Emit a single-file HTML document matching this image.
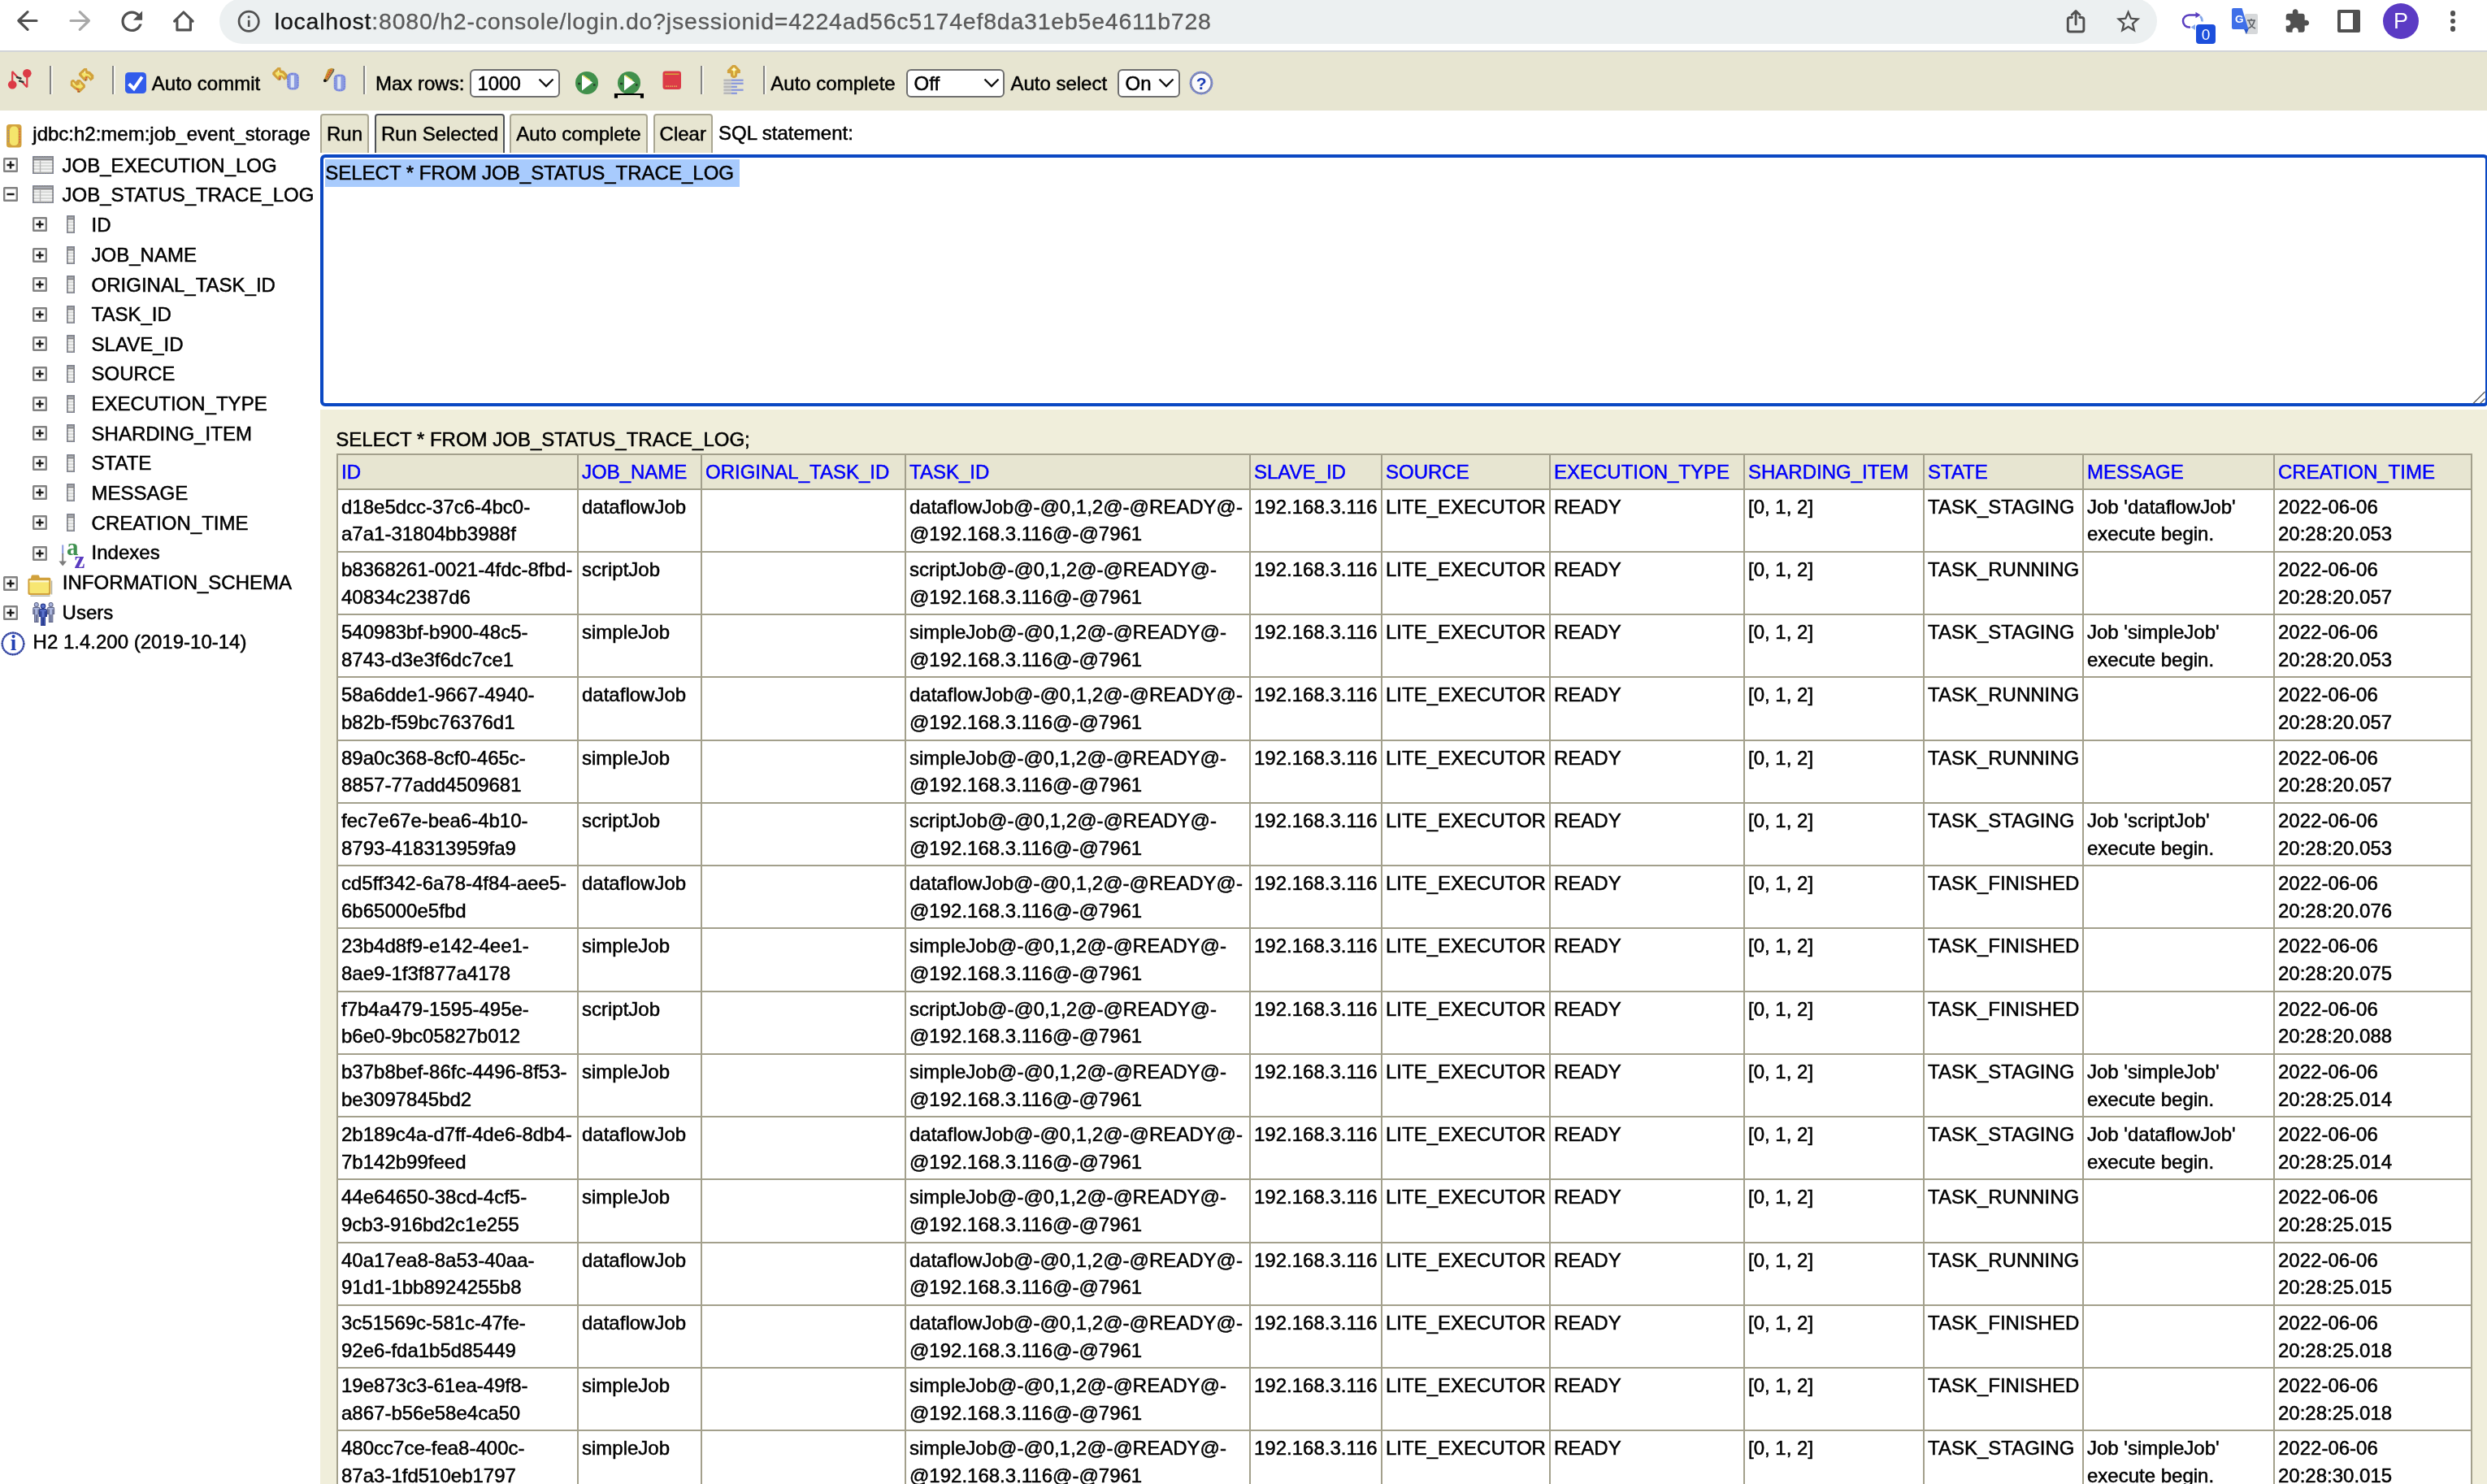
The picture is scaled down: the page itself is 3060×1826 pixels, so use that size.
<!DOCTYPE html><html><head><meta charset="utf-8"><title>H2 Console</title><style>
*{box-sizing:border-box;}
html,body{margin:0;padding:0;}
body{width:3060px;height:1826px;overflow:hidden;position:relative;background:#fff;
 font-family:"Liberation Sans",sans-serif;font-size:24px;color:#000;}
#root{position:absolute;left:0;top:0;width:3060px;height:1826px;overflow:hidden;will-change:transform;-webkit-text-stroke:0.5px;}
.abs{position:absolute;}
.t{position:absolute;white-space:nowrap;line-height:34px;font-size:24px;}
#chrome{position:absolute;left:0;top:0;width:3060px;height:62px;background:#fff;}
#chromeline{position:absolute;left:0;top:62px;width:3060px;height:2px;background:#d2d4d7;}
#pill{position:absolute;left:270px;top:-2px;width:2384px;height:56px;border-radius:28px;background:#ecf0f1;}
#url{position:absolute;left:337.8px;top:9px;font-size:28.5px;line-height:34px;letter-spacing:0.78px;color:#5a5a5a;white-space:nowrap;-webkit-text-stroke:0.3px;}
#url b{font-weight:normal;color:#161616;}
#h2bar{position:absolute;left:0;top:64px;width:3060px;height:72px;background:#e7e5d1;}
.sep{position:absolute;top:81px;width:4px;height:35px;background:linear-gradient(90deg,#858585 0,#858585 55%,#f6f5ee 55%,#f6f5ee 100%);}
.sel{position:absolute;top:85px;height:35px;border:2px solid #6f6f6f;border-radius:6px;background:#fff;}
.sel span{position:absolute;left:7.4px;top:-1px;line-height:34px;font-size:24px;}
.sel svg{position:absolute;right:4.7px;top:9.2px;}
#btns{position:absolute;left:394px;top:136px;width:2666px;height:52px;overflow:hidden;background:#fff;}
.btn{position:absolute;top:4px;height:52px;border:2px solid #a9a692;border-radius:4px;background:#e7e5d1;text-align:center;line-height:46px;font-size:24px;white-space:nowrap;}
#ta{position:absolute;left:394px;top:190px;width:2668px;height:310px;border:4px solid #0b48c3;border-radius:6px;background:#fff;}
#selhl{position:absolute;left:400px;top:196px;width:509.5px;height:34px;background:#a8cbfd;}
#result{position:absolute;left:394px;top:504px;width:2666px;height:1322px;background:#f0eedb;}
table.rs{position:absolute;left:414px;top:558px;border-collapse:collapse;table-layout:fixed;width:2626px;background:#fff;}
table.rs th,table.rs td{border:2px solid #a3a08c;padding:4px 4px;font-size:24px;line-height:33.625px;vertical-align:top;text-align:left;font-weight:normal;white-space:nowrap;overflow:hidden;}
table.rs th{background:#e7e5d1;color:#0000fa;padding-bottom:3px;}
.row{position:absolute;left:0;height:36px;}
</style></head><body><div id="root">
<div id="chrome">
<div id="pill"></div>
<svg width="3060" height="62" viewBox="0 0 3060 62" style="position:absolute;left:0;top:0;"><path d="M45 25.5 H23.2 M34 14.6 L22.8 25.5 L34 36.4" fill="none" stroke="#505050" stroke-width="3.2" stroke-linecap="round" stroke-linejoin="round"/></svg>
<svg width="3060" height="62" viewBox="0 0 3060 62" style="position:absolute;left:0;top:0;"><path d="M87 25.5 H109 M98.2 14.6 L109.4 25.5 L98.2 36.4" fill="none" stroke="#a9a9a9" stroke-width="3.2" stroke-linecap="round" stroke-linejoin="round"/></svg>
<svg width="38.5" height="38.5" viewBox="0 0 24 24" style="position:absolute;left:143.15px;top:6.55px;"><path fill="#505050" d="M17.65 6.35C16.2 4.9 14.21 4 12 4c-4.42 0-7.99 3.58-7.99 8s3.57 8 7.99 8c3.73 0 6.84-2.55 7.73-6h-2.08c-.82 2.33-3.04 4-5.65 4-3.31 0-6-2.69-6-6s2.69-6 6-6c1.66 0 3.14.69 4.22 1.78L13 11h7V4l-2.35 2.35z"/></svg>
<svg width="3060" height="62" viewBox="0 0 3060 62" style="position:absolute;left:0;top:0;"><path d="M214.6 26.2 L225.9 15 L237.2 26.2 M217.9 24.5 V36.9 H234.4 V24.5" fill="none" stroke="#505050" stroke-width="3.1" stroke-linecap="round" stroke-linejoin="round"/></svg>
<svg width="32.4" height="32.4" viewBox="0 0 24 24" style="position:absolute;left:290.10px;top:9.80px;"><path fill="#505050" d="M11 7h2v2h-2zm0 4h2v6h-2zm1-9C6.48 2 2 6.48 2 12s4.48 10 10 10 10-4.48 10-10S17.52 2 12 2zm0 18c-4.41 0-8-3.59-8-8s3.59-8 8-8 8 3.59 8 8-3.59 8-8 8z"/></svg>
<div id="url"><b>localhost</b>:8080/h2-console/login.do?jsessionid=4224ad56c5174ef8da31eb5e4611b728</div>
<svg width="3060" height="62" viewBox="0 0 3060 62" style="position:absolute;left:0;top:0;"><path fill="none" stroke="#505050" stroke-width="2.9" stroke-linecap="round" stroke-linejoin="round" d="M2549.5 21.5 H2547 Q2544.3 21.5 2544.3 24 V36.5 Q2544.3 39 2547 39 H2561.2 Q2563.9 39 2563.9 36.500 V24 Q2563.9 21.5 2561.2 21.5 H2558.7 M2554.1 30 V14 M2549.2 18.3 L2554.1 13.6 L2559 18.3"/></svg>
<svg width="35.2" height="35.2" viewBox="0 0 24 24" style="position:absolute;left:2600.7px;top:9.3px;"><path fill="#505050" d="M22 9.24l-7.19-.62L12 2 9.19 8.63 2 9.24l5.46 4.73L5.82 21 12 17.27 18.18 21l-1.63-7.03L22 9.24zM12 15.4l-3.76 2.27 1-4.28-3.32-2.88 4.38-.38L12 6.1l1.71 4.04 4.38.38-3.32 2.88 1 4.28L12 15.4z"/></svg>
<svg width="30" height="24" viewBox="0 0 30 24" style="position:absolute;left:2683px;top:14px;"><path fill="none" stroke="#5a3fc0" stroke-width="2.5" d="M20 4.5 H10.5 A7.5 7.5 0 0 0 10.5 19.5 H12"/><path fill="#5a3fc0" d="M18.5 0.8 L24.5 4.5 L18.5 8.2z"/><path fill="none" stroke="#86a9ea" stroke-width="2.5" d="M24 6 A7.5 7.5 0 0 1 26.5 12.5"/><path fill="#86a9ea" d="M18 16 L12.5 19.5 L18 23z"/></svg>
<div class="abs" style="left:2702px;top:30px;width:24px;height:24px;border-radius:4px;background:#1c4fdc;color:#fff;font-size:19px;line-height:25px;text-align:center;-webkit-text-stroke:0;">0</div>
<svg width="34" height="34" viewBox="0 0 34 34" style="position:absolute;left:2745px;top:9.5px;"><rect x="17" y="7" width="16" height="25" rx="2" fill="#d6d8da"/><path d="M20 15 h10 M25 13 v2 M22 15 q1 7 8 10 M29 15 q-2 8 -8 10" stroke="#5f6368" stroke-width="1.6" fill="none"/><path d="M1 2 Q1 0 3 0 H13.5 L21.5 26 H3 Q1 26 1 24z" fill="#3f6fe8"/><path d="M16 26 L21.5 26 L19 32z" fill="#2a56c6"/><text x="5" y="18" font-family="Liberation Sans" font-size="13.5" font-weight="bold" fill="#fff" style="-webkit-text-stroke:0">G</text></svg>
<svg width="32.4" height="32.4" viewBox="0 0 24 24" style="position:absolute;left:2809.6px;top:9.9px;"><path fill="#505050" d="M20.5 11H19V7c0-1.1-.9-2-2-2h-4V3.5C13 2.12 11.88 1 10.5 1S8 2.12 8 3.5V5H4c-1.1 0-1.99.9-1.99 2v3.8H3.5c1.49 0 2.7 1.21 2.7 2.7s-1.21 2.7-2.7 2.7H2V20c0 1.1.9 2 2 2h3.8v-1.5c0-1.49 1.21-2.7 2.7-2.7 1.49 0 2.7 1.21 2.7 2.7V22H17c1.1 0 2-.9 2-2v-4h1.5c1.38 0 2.5-1.12 2.5-2.5S21.88 11 20.5 11z"/></svg>
<div class="abs" style="left:2876px;top:12px;width:28px;height:28px;border:4.5px solid #505050;border-radius:2px;"><div style="position:absolute;right:0;top:0;width:5.2px;height:100%;background:#505050"></div></div>
<div class="abs" style="left:2932px;top:4px;width:44px;height:44px;border-radius:22px;background:#5b3bc4;color:#fff;font-size:27px;line-height:45px;text-align:center;-webkit-text-stroke:0;">P</div>
<div class="abs" style="left:3014.6px;top:12.799999999999999px;width:6.8px;height:6.8px;border-radius:50%;background:#505050"></div>
<div class="abs" style="left:3014.6px;top:22.5px;width:6.8px;height:6.8px;border-radius:50%;background:#505050"></div>
<div class="abs" style="left:3014.6px;top:32.2px;width:6.8px;height:6.8px;border-radius:50%;background:#505050"></div>
</div><div id="chromeline"></div>
<div id="h2bar"></div>
<svg width="34" height="30" viewBox="0 0 34 30" style="position:absolute;left:7.7px;top:82.4px;"><g stroke="#dc3a46" stroke-width="2.2" fill="none" stroke-linejoin="bevel"><path d="M7.2 22 V6 L14 13.4"/><path d="M25.3 8 V25.2 L19 18.4"/></g>
<circle cx="7.2" cy="22.3" r="5.3" fill="#dc3a46"/><circle cx="25.3" cy="8.2" r="5.3" fill="#dc3a46"/>
<path d="M13 13.2 l4.5 1.3 M16 17.6 l4.5 1.2" stroke="#333" stroke-width="2.4" stroke-linecap="round"/></svg>
<div class="sep" style="left:60.6px"></div>
<div class="sep" style="left:137.6px"></div>
<div class="sep" style="left:446.5px"></div>
<div class="sep" style="left:861.5px"></div>
<div class="sep" style="left:939.3px"></div>
<svg width="44" height="44" viewBox="80 76 44 44" style="position:absolute;left:80px;top:76px;"><polygon points="96.9,90.2 103.4,83.9 107,83.9 107.6,87.3 110.8,87.9 115.3,92.6 115.3,96.8 111.4,99.7 109.6,97.3 107.9,95 107.6,98.8 105.5,99.7 103.7,99.7 96.9,92.6" fill="#d2a23c"/><polygon points="100.5,90.5 103.7,88.5 106.1,90.5 109.6,91.4 112,94.4 111.7,95.9 108.5,93.5 105.2,93.2 103.7,95.6 100.5,92" fill="#f6e66c"/><polygon points="103.2,89.6 104.6,86.6 105.4,89.8" fill="#fbf6cf"/><circle cx="106.4" cy="95.6" r="0.8" fill="#e03a3a"/><circle cx="105.4" cy="97.5" r="0.8" fill="#e03a3a"/><circle cx="105.6" cy="98.8" r="0.7" fill="#555"/><polygon points="86.8,100 88.9,98.1 91,98.1 93,100.6 95.4,98.1 98.4,98.1 104.9,104.5 104.9,107.4 98.1,113.9 95.4,113.9 94.5,111 91.9,109.8 86.8,105.6" fill="#d2a23c"/><polygon points="88.9,101.2 90.1,100.9 94.2,105.4 97.5,103.9 99,102.7 101.9,105.6 101.9,106.8 99,108.9 94.2,107.4 89.8,104.5" fill="#f6e66c"/><polygon points="89.6,102 90.4,101.4 92.2,103.6" fill="#fbf6cf"/><polygon points="97.6,102.8 98.6,100.8 99.2,103" fill="#fbf6cf"/><circle cx="94.6" cy="109.5" r="0.8" fill="#e03a3a"/><circle cx="96.2" cy="110.6" r="0.8" fill="#e03a3a"/><circle cx="96.3" cy="112.5" r="0.8" fill="#e03a3a"/><circle cx="97.3" cy="112.8" r="0.7" fill="#555"/></svg>
<div class="abs" style="left:154px;top:89px;width:26px;height:26px;border-radius:4.5px;background:#325ceb;"></div>
<svg width="26" height="26" viewBox="0 0 26 26" style="position:absolute;left:154px;top:89px;"><path d="M4.6 14.2 L10.8 20.2 L20.8 5.6" stroke="#fff" stroke-width="4" fill="none"/></svg>
<div class="t" style="left:186.8px;top:86.2px;">Auto commit</div>
<svg width="44" height="44" viewBox="80 76 44 44" style="position:absolute;left:334px;top:76px;"><g transform="translate(-15.7,-0.9)"><polygon points="96.9,90.2 103.4,83.9 107,83.9 107.6,87.3 110.8,87.9 115.3,92.6 115.3,96.8 111.4,99.7 109.6,97.3 107.9,95 107.6,98.8 105.5,99.7 103.7,99.7 96.9,92.6" fill="#d2a23c"/><polygon points="100.5,90.5 103.7,88.5 106.1,90.5 109.6,91.4 112,94.4 111.7,95.9 108.5,93.5 105.2,93.2 103.7,95.6 100.5,92" fill="#f6e66c"/><polygon points="103.2,89.6 104.6,86.6 105.4,89.8" fill="#fbf6cf"/><circle cx="106.4" cy="95.6" r="0.8" fill="#e03a3a"/><circle cx="105.4" cy="97.5" r="0.8" fill="#e03a3a"/><circle cx="105.6" cy="98.8" r="0.7" fill="#555"/></g><path d="M98.8 92.5 l2.2 1.6 v4.6 l-2.2 -1.2z" fill="#606060"/><g transform="translate(99.2,89.6)"><rect x="0" y="0" width="14.5" height="21" rx="6" ry="5" fill="#8b9be0"/><rect x="1.2" y="1.2" width="12.1" height="18.6" rx="5" ry="4.5" fill="none" stroke="#6f78d8" stroke-width="1.4" stroke-dasharray="1.5 1.5"/><rect x="4.5" y="3" width="4.2" height="15" fill="#dfe6f4"/></g></svg>
<svg width="30" height="30" viewBox="0 0 30 30" style="position:absolute;left:397px;top:83px;"><polygon points="6.6,2.2 11,0.8 14.3,2 14,4.5 5.8,17 2.5,17.6 1.8,14.5" fill="#c9982f"/><polygon points="12.6,1.4 14.3,2 14,4.5 5.8,17 4.4,17.3 12.4,4.2" fill="#5e6164"/><path d="M10.6 3.2 L4.6 13.4" stroke="#e0383c" stroke-width="2.2" stroke-dasharray="1.4 1.4"/><circle cx="2.9" cy="16.2" r="1.9" fill="#111"/><g transform="translate(13.7,8.4)"><rect x="0" y="0" width="14.5" height="21" rx="6" ry="5" fill="#8b9be0"/><rect x="1.2" y="1.2" width="12.1" height="18.6" rx="5" ry="4.5" fill="none" stroke="#6f78d8" stroke-width="1.4" stroke-dasharray="1.5 1.5"/><rect x="4.5" y="3" width="4.2" height="15" fill="#dfe6f4"/></g></svg>
<div class="t" style="left:462px;top:86.2px;">Max rows:</div>
<div class="sel" style="left:578px;width:110.5px;"><span>1000</span><svg width="20" height="12" viewBox="0 0 20 12"><path d="M1.5 1.5 L10 10 L18.5 1.5" fill="none" stroke="#111" stroke-width="2.4"/></svg></div>
<svg width="32" height="32" viewBox="0 0 32 32" style="position:absolute;left:706px;top:86px;"><circle cx="16" cy="16" r="14" fill="#41904c"/><path d="M10 6.5 L23.2 15.6 L10 25.5z" fill="#fff"/><path d="M11 6.5 L20 13" stroke="#f2df5e" stroke-width="1.5"/><path d="M5 17 h3.2 M24 18.5 h2.5" stroke="#26402a" stroke-width="2.4"/></svg>
<svg width="40" height="38" viewBox="0 0 40 38" style="position:absolute;left:754px;top:85.5px;"><circle cx="20" cy="16" r="14" fill="#41904c"/><path d="M14 6.5 L27.2 15.6 L14 25.5z" fill="#fff"/><path d="M15 6.5 L24 13" stroke="#f2df5e" stroke-width="1.5"/><path d="M9 17 h3.2 M28 18.5 h2.5" stroke="#26402a" stroke-width="2.4"/><path d="M1.9 28.9 H38 V34.8 H33.9 V31.1 H6 V34.8 H1.9z" fill="#000"/></svg>
<svg width="24" height="24" viewBox="0 0 24 24" style="position:absolute;left:814.7px;top:86.8px;"><rect x="0.5" y="0.5" width="22.5" height="22.5" rx="3.2" fill="#dc3b47"/><path d="M3 4.2 H20.5" stroke="#d6a13c" stroke-width="1.6"/><path d="M4 19.2 H19" stroke="#e9d060" stroke-width="1.3" stroke-dasharray="1.5 1"/></svg>
<svg width="45" height="45" viewBox="880 76 45 45" style="position:absolute;left:880px;top:76px;"><polygon points="901.2,79.9 904.9,79.9 910.9,86.3 910.9,89.9 907.3,90.3 906.7,94.2 904.3,96 901.8,96 899.1,93.9 898.8,90.3 894.9,89.9 894.9,86.3" fill="#d2a23c"/><polygon points="899.4,86 903,82.4 906.7,86 904.3,87.5 904,93 902.4,93 902.1,87.5" fill="#f7e96e"/><polygon points="900.6,85.8 903,83.2 905.4,85.8 903,87.4" fill="#fbf8e2"/><rect x="890.6" y="97.6" width="9.2" height="18.4" fill="#d9d9d6"/><rect x="890.4" y="97.60000000000001" width="9.4" height="2.2" fill="#b6b6b6"/><rect x="899.8" y="97.60000000000001" width="14.800000000000068" height="2.2" fill="#8796dd"/><rect x="890.4" y="101.60000000000001" width="9.4" height="2.2" fill="#b6b6b6"/><rect x="899.8" y="101.60000000000001" width="14.800000000000068" height="2.2" fill="#8796dd"/><rect x="890.4" y="105.7" width="9.4" height="2.2" fill="#b6b6b6"/><rect x="899.8" y="105.7" width="7.100000000000023" height="2.2" fill="#8796dd"/><rect x="890.4" y="109.60000000000001" width="9.4" height="2.2" fill="#b6b6b6"/><rect x="899.8" y="109.60000000000001" width="14.800000000000068" height="2.2" fill="#8796dd"/><rect x="890.4" y="113.7" width="9.4" height="2.2" fill="#b6b6b6"/><rect x="899.8" y="113.7" width="7.100000000000023" height="2.2" fill="#8796dd"/></svg>
<div class="t" style="left:948.3px;top:86.2px;">Auto complete</div>
<div class="sel" style="left:1115.2px;width:121.3px;"><span>Off</span><svg width="20" height="12" viewBox="0 0 20 12"><path d="M1.5 1.5 L10 10 L18.5 1.5" fill="none" stroke="#111" stroke-width="2.4"/></svg></div>
<div class="t" style="left:1243.4px;top:86.2px;">Auto select</div>
<div class="sel" style="left:1375.2px;width:76.8px;"><span>On</span><svg width="20" height="12" viewBox="0 0 20 12"><path d="M1.5 1.5 L10 10 L18.5 1.5" fill="none" stroke="#111" stroke-width="2.4"/></svg></div>
<svg width="32" height="32" viewBox="0 0 32 32" style="position:absolute;left:1462px;top:86px;"><circle cx="16" cy="16" r="12.9" fill="#fbfbfb" stroke="#7d84ad" stroke-width="2.8"/><circle cx="16" cy="16" r="13.6" fill="none" stroke="#7d90e6" stroke-width="1.6" stroke-dasharray="1.6 1.8"/><text x="16.2" y="23.6" text-anchor="middle" font-family="Liberation Sans" font-weight="bold" font-size="21" fill="#1c3eb6" style="-webkit-text-stroke:0.4px #1c3eb6">?</text></svg>
<svg width="19" height="29" viewBox="0 0 19 29" style="position:absolute;left:7.7px;top:152.6px;"><rect x="0" y="0" width="18.5" height="28.5" rx="3.5" fill="#d3a33e"/><rect x="4" y="2.6" width="10.5" height="23.4" rx="4.5" fill="#f5e56c"/><path d="M16.2 5 V24" stroke="#e24848" stroke-width="1.3" stroke-dasharray="1.6 1.6"/><path d="M2.2 7 V22" stroke="#6c7dd0" stroke-width="1" stroke-dasharray="1.3 2"/></svg>
<div class="t" style="left:40.3px;top:147.50px;">jdbc:h2:mem:job_event_storage</div>
<svg width="18" height="18" viewBox="0 0 18 18" style="position:absolute;left:4px;top:194.00px;"><rect x="1.2" y="1.2" width="15.6" height="15.6" rx="0.3" fill="#fff" stroke="#828282" stroke-width="2.4"/><path d="M4.4 9 H13.6" stroke="#1a1a1a" stroke-width="2.5"/><path d="M9 4.4 V13.6" stroke="#1a1a1a" stroke-width="2.5"/></svg>
<svg width="26" height="22" viewBox="0 0 26 22" style="position:absolute;left:40px;top:192.10px;"><rect x="0" y="0" width="26" height="22" fill="#848484"/><rect x="1.8" y="5.6" width="22.4" height="14.8" fill="#d6d8d6"/><rect x="1.8" y="5.6" width="22.4" height="1.7" fill="#f6f6f6"/><rect x="1.8" y="9.4" width="22.4" height="1.7" fill="#f6f6f6"/><rect x="1.8" y="13.2" width="22.4" height="1.7" fill="#f6f6f6"/><rect x="1.8" y="17.0" width="22.4" height="1.7" fill="#f6f6f6"/><rect x="8.8" y="5.6" width="1.4" height="14.8" fill="#b4b4b4"/><rect x="1.8" y="1.8" width="22.4" height="2.0" fill="#a9acb4"/><rect x="0.3" y="0.3" width="25.4" height="21.4" fill="none" stroke="#7f95e8" stroke-width="0.6" stroke-dasharray="1 2.2"/></svg>
<div class="t" style="left:76.6px;top:186.50px;">JOB_EXECUTION_LOG</div>
<svg width="18" height="18" viewBox="0 0 18 18" style="position:absolute;left:4px;top:230.00px;"><rect x="1.2" y="1.2" width="15.6" height="15.6" rx="0.3" fill="#fff" stroke="#828282" stroke-width="2.4"/><path d="M4.4 9 H13.6" stroke="#1a1a1a" stroke-width="2.5"/></svg>
<svg width="26" height="22" viewBox="0 0 26 22" style="position:absolute;left:40px;top:228.10px;"><rect x="0" y="0" width="26" height="22" fill="#848484"/><rect x="1.8" y="5.6" width="22.4" height="14.8" fill="#d6d8d6"/><rect x="1.8" y="5.6" width="22.4" height="1.7" fill="#f6f6f6"/><rect x="1.8" y="9.4" width="22.4" height="1.7" fill="#f6f6f6"/><rect x="1.8" y="13.2" width="22.4" height="1.7" fill="#f6f6f6"/><rect x="1.8" y="17.0" width="22.4" height="1.7" fill="#f6f6f6"/><rect x="8.8" y="5.6" width="1.4" height="14.8" fill="#b4b4b4"/><rect x="1.8" y="1.8" width="22.4" height="2.0" fill="#a9acb4"/><rect x="0.3" y="0.3" width="25.4" height="21.4" fill="none" stroke="#7f95e8" stroke-width="0.6" stroke-dasharray="1 2.2"/></svg>
<div class="t" style="left:76.6px;top:222.50px;">JOB_STATUS_TRACE_LOG</div>
<svg width="18" height="18" viewBox="0 0 18 18" style="position:absolute;left:40px;top:267.00px;"><rect x="1.2" y="1.2" width="15.6" height="15.6" rx="0.3" fill="#fff" stroke="#828282" stroke-width="2.4"/><path d="M4.4 9 H13.6" stroke="#1a1a1a" stroke-width="2.5"/><path d="M9 4.4 V13.6" stroke="#1a1a1a" stroke-width="2.5"/></svg>
<svg width="10" height="22" viewBox="0 0 10 22" style="position:absolute;left:82px;top:264.90px;"><rect x="0" y="0" width="10" height="22" fill="#848484"/><rect x="1.8" y="5.6" width="6.4" height="14.8" fill="#d6d8d6"/><rect x="1.8" y="1.8" width="6.4" height="2.0" fill="#a9acb4"/><rect x="1.8" y="5.6" width="6.4" height="1.7" fill="#f6f6f6"/><rect x="1.8" y="9.4" width="6.4" height="1.7" fill="#f6f6f6"/><rect x="1.8" y="13.2" width="6.4" height="1.7" fill="#f6f6f6"/><rect x="1.8" y="17.0" width="6.4" height="1.7" fill="#f6f6f6"/><rect x="0.3" y="0.3" width="9.4" height="21.4" fill="none" stroke="#7f95e8" stroke-width="0.6" stroke-dasharray="1 2.2"/></svg>
<div class="t" style="left:112.6px;top:259.50px;">ID</div>
<svg width="18" height="18" viewBox="0 0 18 18" style="position:absolute;left:40px;top:305.00px;"><rect x="1.2" y="1.2" width="15.6" height="15.6" rx="0.3" fill="#fff" stroke="#828282" stroke-width="2.4"/><path d="M4.4 9 H13.6" stroke="#1a1a1a" stroke-width="2.5"/><path d="M9 4.4 V13.6" stroke="#1a1a1a" stroke-width="2.5"/></svg>
<svg width="10" height="22" viewBox="0 0 10 22" style="position:absolute;left:82px;top:302.90px;"><rect x="0" y="0" width="10" height="22" fill="#848484"/><rect x="1.8" y="5.6" width="6.4" height="14.8" fill="#d6d8d6"/><rect x="1.8" y="1.8" width="6.4" height="2.0" fill="#a9acb4"/><rect x="1.8" y="5.6" width="6.4" height="1.7" fill="#f6f6f6"/><rect x="1.8" y="9.4" width="6.4" height="1.7" fill="#f6f6f6"/><rect x="1.8" y="13.2" width="6.4" height="1.7" fill="#f6f6f6"/><rect x="1.8" y="17.0" width="6.4" height="1.7" fill="#f6f6f6"/><rect x="0.3" y="0.3" width="9.4" height="21.4" fill="none" stroke="#7f95e8" stroke-width="0.6" stroke-dasharray="1 2.2"/></svg>
<div class="t" style="left:112.6px;top:296.50px;">JOB_NAME</div>
<svg width="18" height="18" viewBox="0 0 18 18" style="position:absolute;left:40px;top:341.00px;"><rect x="1.2" y="1.2" width="15.6" height="15.6" rx="0.3" fill="#fff" stroke="#828282" stroke-width="2.4"/><path d="M4.4 9 H13.6" stroke="#1a1a1a" stroke-width="2.5"/><path d="M9 4.4 V13.6" stroke="#1a1a1a" stroke-width="2.5"/></svg>
<svg width="10" height="22" viewBox="0 0 10 22" style="position:absolute;left:82px;top:338.90px;"><rect x="0" y="0" width="10" height="22" fill="#848484"/><rect x="1.8" y="5.6" width="6.4" height="14.8" fill="#d6d8d6"/><rect x="1.8" y="1.8" width="6.4" height="2.0" fill="#a9acb4"/><rect x="1.8" y="5.6" width="6.4" height="1.7" fill="#f6f6f6"/><rect x="1.8" y="9.4" width="6.4" height="1.7" fill="#f6f6f6"/><rect x="1.8" y="13.2" width="6.4" height="1.7" fill="#f6f6f6"/><rect x="1.8" y="17.0" width="6.4" height="1.7" fill="#f6f6f6"/><rect x="0.3" y="0.3" width="9.4" height="21.4" fill="none" stroke="#7f95e8" stroke-width="0.6" stroke-dasharray="1 2.2"/></svg>
<div class="t" style="left:112.6px;top:333.50px;">ORIGINAL_TASK_ID</div>
<svg width="18" height="18" viewBox="0 0 18 18" style="position:absolute;left:40px;top:378.00px;"><rect x="1.2" y="1.2" width="15.6" height="15.6" rx="0.3" fill="#fff" stroke="#828282" stroke-width="2.4"/><path d="M4.4 9 H13.6" stroke="#1a1a1a" stroke-width="2.5"/><path d="M9 4.4 V13.6" stroke="#1a1a1a" stroke-width="2.5"/></svg>
<svg width="10" height="22" viewBox="0 0 10 22" style="position:absolute;left:82px;top:375.90px;"><rect x="0" y="0" width="10" height="22" fill="#848484"/><rect x="1.8" y="5.6" width="6.4" height="14.8" fill="#d6d8d6"/><rect x="1.8" y="1.8" width="6.4" height="2.0" fill="#a9acb4"/><rect x="1.8" y="5.6" width="6.4" height="1.7" fill="#f6f6f6"/><rect x="1.8" y="9.4" width="6.4" height="1.7" fill="#f6f6f6"/><rect x="1.8" y="13.2" width="6.4" height="1.7" fill="#f6f6f6"/><rect x="1.8" y="17.0" width="6.4" height="1.7" fill="#f6f6f6"/><rect x="0.3" y="0.3" width="9.4" height="21.4" fill="none" stroke="#7f95e8" stroke-width="0.6" stroke-dasharray="1 2.2"/></svg>
<div class="t" style="left:112.6px;top:369.50px;">TASK_ID</div>
<svg width="18" height="18" viewBox="0 0 18 18" style="position:absolute;left:40px;top:414.00px;"><rect x="1.2" y="1.2" width="15.6" height="15.6" rx="0.3" fill="#fff" stroke="#828282" stroke-width="2.4"/><path d="M4.4 9 H13.6" stroke="#1a1a1a" stroke-width="2.5"/><path d="M9 4.4 V13.6" stroke="#1a1a1a" stroke-width="2.5"/></svg>
<svg width="10" height="22" viewBox="0 0 10 22" style="position:absolute;left:82px;top:411.90px;"><rect x="0" y="0" width="10" height="22" fill="#848484"/><rect x="1.8" y="5.6" width="6.4" height="14.8" fill="#d6d8d6"/><rect x="1.8" y="1.8" width="6.4" height="2.0" fill="#a9acb4"/><rect x="1.8" y="5.6" width="6.4" height="1.7" fill="#f6f6f6"/><rect x="1.8" y="9.4" width="6.4" height="1.7" fill="#f6f6f6"/><rect x="1.8" y="13.2" width="6.4" height="1.7" fill="#f6f6f6"/><rect x="1.8" y="17.0" width="6.4" height="1.7" fill="#f6f6f6"/><rect x="0.3" y="0.3" width="9.4" height="21.4" fill="none" stroke="#7f95e8" stroke-width="0.6" stroke-dasharray="1 2.2"/></svg>
<div class="t" style="left:112.6px;top:406.50px;">SLAVE_ID</div>
<svg width="18" height="18" viewBox="0 0 18 18" style="position:absolute;left:40px;top:451.00px;"><rect x="1.2" y="1.2" width="15.6" height="15.6" rx="0.3" fill="#fff" stroke="#828282" stroke-width="2.4"/><path d="M4.4 9 H13.6" stroke="#1a1a1a" stroke-width="2.5"/><path d="M9 4.4 V13.6" stroke="#1a1a1a" stroke-width="2.5"/></svg>
<svg width="10" height="22" viewBox="0 0 10 22" style="position:absolute;left:82px;top:448.90px;"><rect x="0" y="0" width="10" height="22" fill="#848484"/><rect x="1.8" y="5.6" width="6.4" height="14.8" fill="#d6d8d6"/><rect x="1.8" y="1.8" width="6.4" height="2.0" fill="#a9acb4"/><rect x="1.8" y="5.6" width="6.4" height="1.7" fill="#f6f6f6"/><rect x="1.8" y="9.4" width="6.4" height="1.7" fill="#f6f6f6"/><rect x="1.8" y="13.2" width="6.4" height="1.7" fill="#f6f6f6"/><rect x="1.8" y="17.0" width="6.4" height="1.7" fill="#f6f6f6"/><rect x="0.3" y="0.3" width="9.4" height="21.4" fill="none" stroke="#7f95e8" stroke-width="0.6" stroke-dasharray="1 2.2"/></svg>
<div class="t" style="left:112.6px;top:442.50px;">SOURCE</div>
<svg width="18" height="18" viewBox="0 0 18 18" style="position:absolute;left:40px;top:488.00px;"><rect x="1.2" y="1.2" width="15.6" height="15.6" rx="0.3" fill="#fff" stroke="#828282" stroke-width="2.4"/><path d="M4.4 9 H13.6" stroke="#1a1a1a" stroke-width="2.5"/><path d="M9 4.4 V13.6" stroke="#1a1a1a" stroke-width="2.5"/></svg>
<svg width="10" height="22" viewBox="0 0 10 22" style="position:absolute;left:82px;top:485.90px;"><rect x="0" y="0" width="10" height="22" fill="#848484"/><rect x="1.8" y="5.6" width="6.4" height="14.8" fill="#d6d8d6"/><rect x="1.8" y="1.8" width="6.4" height="2.0" fill="#a9acb4"/><rect x="1.8" y="5.6" width="6.4" height="1.7" fill="#f6f6f6"/><rect x="1.8" y="9.4" width="6.4" height="1.7" fill="#f6f6f6"/><rect x="1.8" y="13.2" width="6.4" height="1.7" fill="#f6f6f6"/><rect x="1.8" y="17.0" width="6.4" height="1.7" fill="#f6f6f6"/><rect x="0.3" y="0.3" width="9.4" height="21.4" fill="none" stroke="#7f95e8" stroke-width="0.6" stroke-dasharray="1 2.2"/></svg>
<div class="t" style="left:112.6px;top:479.50px;">EXECUTION_TYPE</div>
<svg width="18" height="18" viewBox="0 0 18 18" style="position:absolute;left:40px;top:524.00px;"><rect x="1.2" y="1.2" width="15.6" height="15.6" rx="0.3" fill="#fff" stroke="#828282" stroke-width="2.4"/><path d="M4.4 9 H13.6" stroke="#1a1a1a" stroke-width="2.5"/><path d="M9 4.4 V13.6" stroke="#1a1a1a" stroke-width="2.5"/></svg>
<svg width="10" height="22" viewBox="0 0 10 22" style="position:absolute;left:82px;top:521.90px;"><rect x="0" y="0" width="10" height="22" fill="#848484"/><rect x="1.8" y="5.6" width="6.4" height="14.8" fill="#d6d8d6"/><rect x="1.8" y="1.8" width="6.4" height="2.0" fill="#a9acb4"/><rect x="1.8" y="5.6" width="6.4" height="1.7" fill="#f6f6f6"/><rect x="1.8" y="9.4" width="6.4" height="1.7" fill="#f6f6f6"/><rect x="1.8" y="13.2" width="6.4" height="1.7" fill="#f6f6f6"/><rect x="1.8" y="17.0" width="6.4" height="1.7" fill="#f6f6f6"/><rect x="0.3" y="0.3" width="9.4" height="21.4" fill="none" stroke="#7f95e8" stroke-width="0.6" stroke-dasharray="1 2.2"/></svg>
<div class="t" style="left:112.6px;top:516.50px;">SHARDING_ITEM</div>
<svg width="18" height="18" viewBox="0 0 18 18" style="position:absolute;left:40px;top:561.00px;"><rect x="1.2" y="1.2" width="15.6" height="15.6" rx="0.3" fill="#fff" stroke="#828282" stroke-width="2.4"/><path d="M4.4 9 H13.6" stroke="#1a1a1a" stroke-width="2.5"/><path d="M9 4.4 V13.6" stroke="#1a1a1a" stroke-width="2.5"/></svg>
<svg width="10" height="22" viewBox="0 0 10 22" style="position:absolute;left:82px;top:558.90px;"><rect x="0" y="0" width="10" height="22" fill="#848484"/><rect x="1.8" y="5.6" width="6.4" height="14.8" fill="#d6d8d6"/><rect x="1.8" y="1.8" width="6.4" height="2.0" fill="#a9acb4"/><rect x="1.8" y="5.6" width="6.4" height="1.7" fill="#f6f6f6"/><rect x="1.8" y="9.4" width="6.4" height="1.7" fill="#f6f6f6"/><rect x="1.8" y="13.2" width="6.4" height="1.7" fill="#f6f6f6"/><rect x="1.8" y="17.0" width="6.4" height="1.7" fill="#f6f6f6"/><rect x="0.3" y="0.3" width="9.4" height="21.4" fill="none" stroke="#7f95e8" stroke-width="0.6" stroke-dasharray="1 2.2"/></svg>
<div class="t" style="left:112.6px;top:552.50px;">STATE</div>
<svg width="18" height="18" viewBox="0 0 18 18" style="position:absolute;left:40px;top:597.00px;"><rect x="1.2" y="1.2" width="15.6" height="15.6" rx="0.3" fill="#fff" stroke="#828282" stroke-width="2.4"/><path d="M4.4 9 H13.6" stroke="#1a1a1a" stroke-width="2.5"/><path d="M9 4.4 V13.6" stroke="#1a1a1a" stroke-width="2.5"/></svg>
<svg width="10" height="22" viewBox="0 0 10 22" style="position:absolute;left:82px;top:594.90px;"><rect x="0" y="0" width="10" height="22" fill="#848484"/><rect x="1.8" y="5.6" width="6.4" height="14.8" fill="#d6d8d6"/><rect x="1.8" y="1.8" width="6.4" height="2.0" fill="#a9acb4"/><rect x="1.8" y="5.6" width="6.4" height="1.7" fill="#f6f6f6"/><rect x="1.8" y="9.4" width="6.4" height="1.7" fill="#f6f6f6"/><rect x="1.8" y="13.2" width="6.4" height="1.7" fill="#f6f6f6"/><rect x="1.8" y="17.0" width="6.4" height="1.7" fill="#f6f6f6"/><rect x="0.3" y="0.3" width="9.4" height="21.4" fill="none" stroke="#7f95e8" stroke-width="0.6" stroke-dasharray="1 2.2"/></svg>
<div class="t" style="left:112.6px;top:589.50px;">MESSAGE</div>
<svg width="18" height="18" viewBox="0 0 18 18" style="position:absolute;left:40px;top:634.00px;"><rect x="1.2" y="1.2" width="15.6" height="15.6" rx="0.3" fill="#fff" stroke="#828282" stroke-width="2.4"/><path d="M4.4 9 H13.6" stroke="#1a1a1a" stroke-width="2.5"/><path d="M9 4.4 V13.6" stroke="#1a1a1a" stroke-width="2.5"/></svg>
<svg width="10" height="22" viewBox="0 0 10 22" style="position:absolute;left:82px;top:631.90px;"><rect x="0" y="0" width="10" height="22" fill="#848484"/><rect x="1.8" y="5.6" width="6.4" height="14.8" fill="#d6d8d6"/><rect x="1.8" y="1.8" width="6.4" height="2.0" fill="#a9acb4"/><rect x="1.8" y="5.6" width="6.4" height="1.7" fill="#f6f6f6"/><rect x="1.8" y="9.4" width="6.4" height="1.7" fill="#f6f6f6"/><rect x="1.8" y="13.2" width="6.4" height="1.7" fill="#f6f6f6"/><rect x="1.8" y="17.0" width="6.4" height="1.7" fill="#f6f6f6"/><rect x="0.3" y="0.3" width="9.4" height="21.4" fill="none" stroke="#7f95e8" stroke-width="0.6" stroke-dasharray="1 2.2"/></svg>
<div class="t" style="left:112.6px;top:626.50px;">CREATION_TIME</div>
<svg width="18" height="18" viewBox="0 0 18 18" style="position:absolute;left:40px;top:672.00px;"><rect x="1.2" y="1.2" width="15.6" height="15.6" rx="0.3" fill="#fff" stroke="#828282" stroke-width="2.4"/><path d="M4.4 9 H13.6" stroke="#1a1a1a" stroke-width="2.5"/><path d="M9 4.4 V13.6" stroke="#1a1a1a" stroke-width="2.5"/></svg>
<svg width="36" height="32" viewBox="0 0 36 32" style="position:absolute;left:71.5px;top:667.60px;"><path d="M5.2 2.5 V14" stroke="#8c9be0" stroke-width="2"/><path d="M5.2 13 V26" stroke="#858585" stroke-width="2"/><path d="M0.4 22.6 L5.2 28.6 L10 22.6z" fill="#7d7d7d"/><text x="10" y="14.6" font-family="Liberation Serif" font-weight="bold" font-size="29" fill="#3f9150" style="-webkit-text-stroke:0.6px #3f9150">a</text><text x="19.6" y="30.8" font-family="Liberation Serif" font-weight="bold" font-size="29" fill="#5a3cc0" style="-webkit-text-stroke:0.6px #5a3cc0">z</text></svg>
<div class="t" style="left:112.6px;top:662.50px;">Indexes</div>
<svg width="18" height="18" viewBox="0 0 18 18" style="position:absolute;left:4px;top:709.00px;"><rect x="1.2" y="1.2" width="15.6" height="15.6" rx="0.3" fill="#fff" stroke="#828282" stroke-width="2.4"/><path d="M4.4 9 H13.6" stroke="#1a1a1a" stroke-width="2.5"/><path d="M9 4.4 V13.6" stroke="#1a1a1a" stroke-width="2.5"/></svg>
<svg width="31" height="28" viewBox="0 0 31 28" style="position:absolute;left:34px;top:706.70px;"><path d="M0.4 6.5 Q0.4 4.8 2 4.8 L4 4.8 L4.6 1.6 Q4.8 0.4 6.2 0.4 H12.6 Q14 0.4 14.2 1.6 L14.8 3.8 H26.6 Q28.4 3.8 28.4 5.6 V23 Q28.4 25 26.4 25 H2.4 Q0.4 25 0.4 23z" fill="#d1a13c"/><path d="M2.4 8 H26.2 V21.4 Q26.2 23 24.6 23 H4 Q2.4 23 2.4 21.4z" fill="#f7e672"/><path d="M2.4 7.2 H26.2 V9.4 H2.4z" fill="#fdf9d8"/><path d="M3.4 26.2 H27.6 M29.6 7.5 V24.5" stroke="#b4b4a4" stroke-width="1.4"/></svg>
<div class="t" style="left:76.8px;top:699.50px;">INFORMATION_SCHEMA</div>
<svg width="18" height="18" viewBox="0 0 18 18" style="position:absolute;left:4px;top:745.00px;"><rect x="1.2" y="1.2" width="15.6" height="15.6" rx="0.3" fill="#fff" stroke="#828282" stroke-width="2.4"/><path d="M4.4 9 H13.6" stroke="#1a1a1a" stroke-width="2.5"/><path d="M9 4.4 V13.6" stroke="#1a1a1a" stroke-width="2.5"/></svg>
<svg width="28" height="30" viewBox="0 0 28 30" style="position:absolute;left:39.5px;top:740.60px;"><g transform="translate(0.8,0.4) scale(1.0)"><circle cx="4" cy="2.6" r="2.5" fill="#a9b4dc" stroke="#646a8c" stroke-width="1.1"/><path d="M1.2 6 H6.8 Q8 6 8 7.5 V14 H6.6 V9 H6.2 V24 H4.4 V15.5 H3.6 V24 H1.8 V9 H1.4 V14 H0 V7.5 Q0 6 1.2 6z" fill="#a9b4dc" stroke="#646a8c" stroke-width="1.1"/></g><g transform="translate(18.6,0.4) scale(1.0)"><circle cx="4" cy="2.6" r="2.5" fill="#a9b4dc" stroke="#646a8c" stroke-width="1.1"/><path d="M1.2 6 H6.8 Q8 6 8 7.5 V14 H6.6 V9 H6.2 V24 H4.4 V15.5 H3.6 V24 H1.8 V9 H1.4 V14 H0 V7.5 Q0 6 1.2 6z" fill="#a9b4dc" stroke="#646a8c" stroke-width="1.1"/></g><g transform="translate(8.6,2) scale(1.1)"><circle cx="4" cy="2.6" r="2.5" fill="#5a72cc" stroke="#27398c" stroke-width="1.1"/><path d="M1.2 6 H6.8 Q8 6 8 7.5 V14 H6.6 V9 H6.2 V24 H4.4 V15.5 H3.6 V24 H1.8 V9 H1.4 V14 H0 V7.5 Q0 6 1.2 6z" fill="#5a72cc" stroke="#27398c" stroke-width="1.1"/></g></svg>
<div class="t" style="left:76.6px;top:736.50px;">Users</div>
<svg width="30" height="30" viewBox="0 0 30 30" style="position:absolute;left:1px;top:777.30px;"><circle cx="15" cy="15" r="13.2" fill="#fff" stroke="#4f63c8" stroke-width="2.4"/><circle cx="15" cy="15" r="13.6" fill="none" stroke="#333c6e" stroke-width="1.6" stroke-dasharray="1.4 1.6"/><text x="15.4" y="23.4" text-anchor="middle" font-family="Liberation Serif" font-weight="bold" font-size="27" fill="#2341b4" style="-webkit-text-stroke:0.9px #2341b4">i</text></svg>
<div class="t" style="left:40.6px;top:772.50px;">H2 1.4.200 (2019-10-14)</div>
<div id="btns">
<div class="btn" style="left:0px;width:60px;">Run</div>
<div class="btn" style="left:67px;width:160px;border-color:#4e5157;">Run Selected</div>
<div class="btn" style="left:233px;width:170px;">Auto complete</div>
<div class="btn" style="left:410px;width:72.5px;">Clear</div>
<div class="t" style="left:490px;top:11.4px;">SQL statement:</div>
</div>
<div id="ta"></div><div id="selhl"></div>
<div class="t" style="left:400.2px;top:196px;line-height:33.6px;">SELECT * FROM JOB_STATUS_TRACE_LOG</div>
<svg width="16" height="16" viewBox="0 0 16 16" style="position:absolute;left:3042px;top:480.5px;"><path d="M1 15.5 L15.5 1 M9.5 15.5 L15.5 9.5" stroke="#5a5a5a" stroke-width="1.3"/></svg>
<div id="result"></div>
<div class="t" style="left:413.3px;top:523.6px;line-height:33.6px;">SELECT * FROM JOB_STATUS_TRACE_LOG;</div>
<table class="rs"><colgroup><col style="width:296px"><col style="width:152px"><col style="width:251px"><col style="width:424px"><col style="width:162px"><col style="width:207px"><col style="width:239px"><col style="width:221px"><col style="width:196px"><col style="width:235px"><col style="width:243px"></colgroup>
<tr><th>ID</th><th>JOB_NAME</th><th>ORIGINAL_TASK_ID</th><th>TASK_ID</th><th>SLAVE_ID</th><th>SOURCE</th><th>EXECUTION_TYPE</th><th>SHARDING_ITEM</th><th>STATE</th><th>MESSAGE</th><th>CREATION_TIME</th></tr>
<tr><td>d18e5dcc-37c6-4bc0-<br>a7a1-31804bb3988f</td><td>dataflowJob</td><td></td><td>dataflowJob@-@0,1,2@-@READY@-<br>@192.168.3.116@-@7961</td><td>192.168.3.116</td><td>LITE_EXECUTOR</td><td>READY</td><td>[0, 1, 2]</td><td>TASK_STAGING</td><td>Job 'dataflowJob'<br>execute begin.</td><td>2022-06-06<br>20:28:20.053</td></tr>
<tr><td>b8368261-0021-4fdc-8fbd-<br>40834c2387d6</td><td>scriptJob</td><td></td><td>scriptJob@-@0,1,2@-@READY@-<br>@192.168.3.116@-@7961</td><td>192.168.3.116</td><td>LITE_EXECUTOR</td><td>READY</td><td>[0, 1, 2]</td><td>TASK_RUNNING</td><td></td><td>2022-06-06<br>20:28:20.057</td></tr>
<tr><td>540983bf-b900-48c5-<br>8743-d3e3f6dc7ce1</td><td>simpleJob</td><td></td><td>simpleJob@-@0,1,2@-@READY@-<br>@192.168.3.116@-@7961</td><td>192.168.3.116</td><td>LITE_EXECUTOR</td><td>READY</td><td>[0, 1, 2]</td><td>TASK_STAGING</td><td>Job 'simpleJob'<br>execute begin.</td><td>2022-06-06<br>20:28:20.053</td></tr>
<tr><td>58a6dde1-9667-4940-<br>b82b-f59bc76376d1</td><td>dataflowJob</td><td></td><td>dataflowJob@-@0,1,2@-@READY@-<br>@192.168.3.116@-@7961</td><td>192.168.3.116</td><td>LITE_EXECUTOR</td><td>READY</td><td>[0, 1, 2]</td><td>TASK_RUNNING</td><td></td><td>2022-06-06<br>20:28:20.057</td></tr>
<tr><td>89a0c368-8cf0-465c-<br>8857-77add4509681</td><td>simpleJob</td><td></td><td>simpleJob@-@0,1,2@-@READY@-<br>@192.168.3.116@-@7961</td><td>192.168.3.116</td><td>LITE_EXECUTOR</td><td>READY</td><td>[0, 1, 2]</td><td>TASK_RUNNING</td><td></td><td>2022-06-06<br>20:28:20.057</td></tr>
<tr><td>fec7e67e-bea6-4b10-<br>8793-418313959fa9</td><td>scriptJob</td><td></td><td>scriptJob@-@0,1,2@-@READY@-<br>@192.168.3.116@-@7961</td><td>192.168.3.116</td><td>LITE_EXECUTOR</td><td>READY</td><td>[0, 1, 2]</td><td>TASK_STAGING</td><td>Job 'scriptJob'<br>execute begin.</td><td>2022-06-06<br>20:28:20.053</td></tr>
<tr><td>cd5ff342-6a78-4f84-aee5-<br>6b65000e5fbd</td><td>dataflowJob</td><td></td><td>dataflowJob@-@0,1,2@-@READY@-<br>@192.168.3.116@-@7961</td><td>192.168.3.116</td><td>LITE_EXECUTOR</td><td>READY</td><td>[0, 1, 2]</td><td>TASK_FINISHED</td><td></td><td>2022-06-06<br>20:28:20.076</td></tr>
<tr><td>23b4d8f9-e142-4ee1-<br>8ae9-1f3f877a4178</td><td>simpleJob</td><td></td><td>simpleJob@-@0,1,2@-@READY@-<br>@192.168.3.116@-@7961</td><td>192.168.3.116</td><td>LITE_EXECUTOR</td><td>READY</td><td>[0, 1, 2]</td><td>TASK_FINISHED</td><td></td><td>2022-06-06<br>20:28:20.075</td></tr>
<tr><td>f7b4a479-1595-495e-<br>b6e0-9bc05827b012</td><td>scriptJob</td><td></td><td>scriptJob@-@0,1,2@-@READY@-<br>@192.168.3.116@-@7961</td><td>192.168.3.116</td><td>LITE_EXECUTOR</td><td>READY</td><td>[0, 1, 2]</td><td>TASK_FINISHED</td><td></td><td>2022-06-06<br>20:28:20.088</td></tr>
<tr><td>b37b8bef-86fc-4496-8f53-<br>be3097845bd2</td><td>simpleJob</td><td></td><td>simpleJob@-@0,1,2@-@READY@-<br>@192.168.3.116@-@7961</td><td>192.168.3.116</td><td>LITE_EXECUTOR</td><td>READY</td><td>[0, 1, 2]</td><td>TASK_STAGING</td><td>Job 'simpleJob'<br>execute begin.</td><td>2022-06-06<br>20:28:25.014</td></tr>
<tr><td>2b189c4a-d7ff-4de6-8db4-<br>7b142b99feed</td><td>dataflowJob</td><td></td><td>dataflowJob@-@0,1,2@-@READY@-<br>@192.168.3.116@-@7961</td><td>192.168.3.116</td><td>LITE_EXECUTOR</td><td>READY</td><td>[0, 1, 2]</td><td>TASK_STAGING</td><td>Job 'dataflowJob'<br>execute begin.</td><td>2022-06-06<br>20:28:25.014</td></tr>
<tr><td>44e64650-38cd-4cf5-<br>9cb3-916bd2c1e255</td><td>simpleJob</td><td></td><td>simpleJob@-@0,1,2@-@READY@-<br>@192.168.3.116@-@7961</td><td>192.168.3.116</td><td>LITE_EXECUTOR</td><td>READY</td><td>[0, 1, 2]</td><td>TASK_RUNNING</td><td></td><td>2022-06-06<br>20:28:25.015</td></tr>
<tr><td>40a17ea8-8a53-40aa-<br>91d1-1bb8924255b8</td><td>dataflowJob</td><td></td><td>dataflowJob@-@0,1,2@-@READY@-<br>@192.168.3.116@-@7961</td><td>192.168.3.116</td><td>LITE_EXECUTOR</td><td>READY</td><td>[0, 1, 2]</td><td>TASK_RUNNING</td><td></td><td>2022-06-06<br>20:28:25.015</td></tr>
<tr><td>3c51569c-581c-47fe-<br>92e6-fda1b5d85449</td><td>dataflowJob</td><td></td><td>dataflowJob@-@0,1,2@-@READY@-<br>@192.168.3.116@-@7961</td><td>192.168.3.116</td><td>LITE_EXECUTOR</td><td>READY</td><td>[0, 1, 2]</td><td>TASK_FINISHED</td><td></td><td>2022-06-06<br>20:28:25.018</td></tr>
<tr><td>19e873c3-61ea-49f8-<br>a867-b56e58e4ca50</td><td>simpleJob</td><td></td><td>simpleJob@-@0,1,2@-@READY@-<br>@192.168.3.116@-@7961</td><td>192.168.3.116</td><td>LITE_EXECUTOR</td><td>READY</td><td>[0, 1, 2]</td><td>TASK_FINISHED</td><td></td><td>2022-06-06<br>20:28:25.018</td></tr>
<tr><td>480cc7ce-fea8-400c-<br>87a3-1fd510eb1797</td><td>simpleJob</td><td></td><td>simpleJob@-@0,1,2@-@READY@-<br>@192.168.3.116@-@7961</td><td>192.168.3.116</td><td>LITE_EXECUTOR</td><td>READY</td><td>[0, 1, 2]</td><td>TASK_STAGING</td><td>Job 'simpleJob'<br>execute begin.</td><td>2022-06-06<br>20:28:30.015</td></tr>
</table>
</div></body></html>
